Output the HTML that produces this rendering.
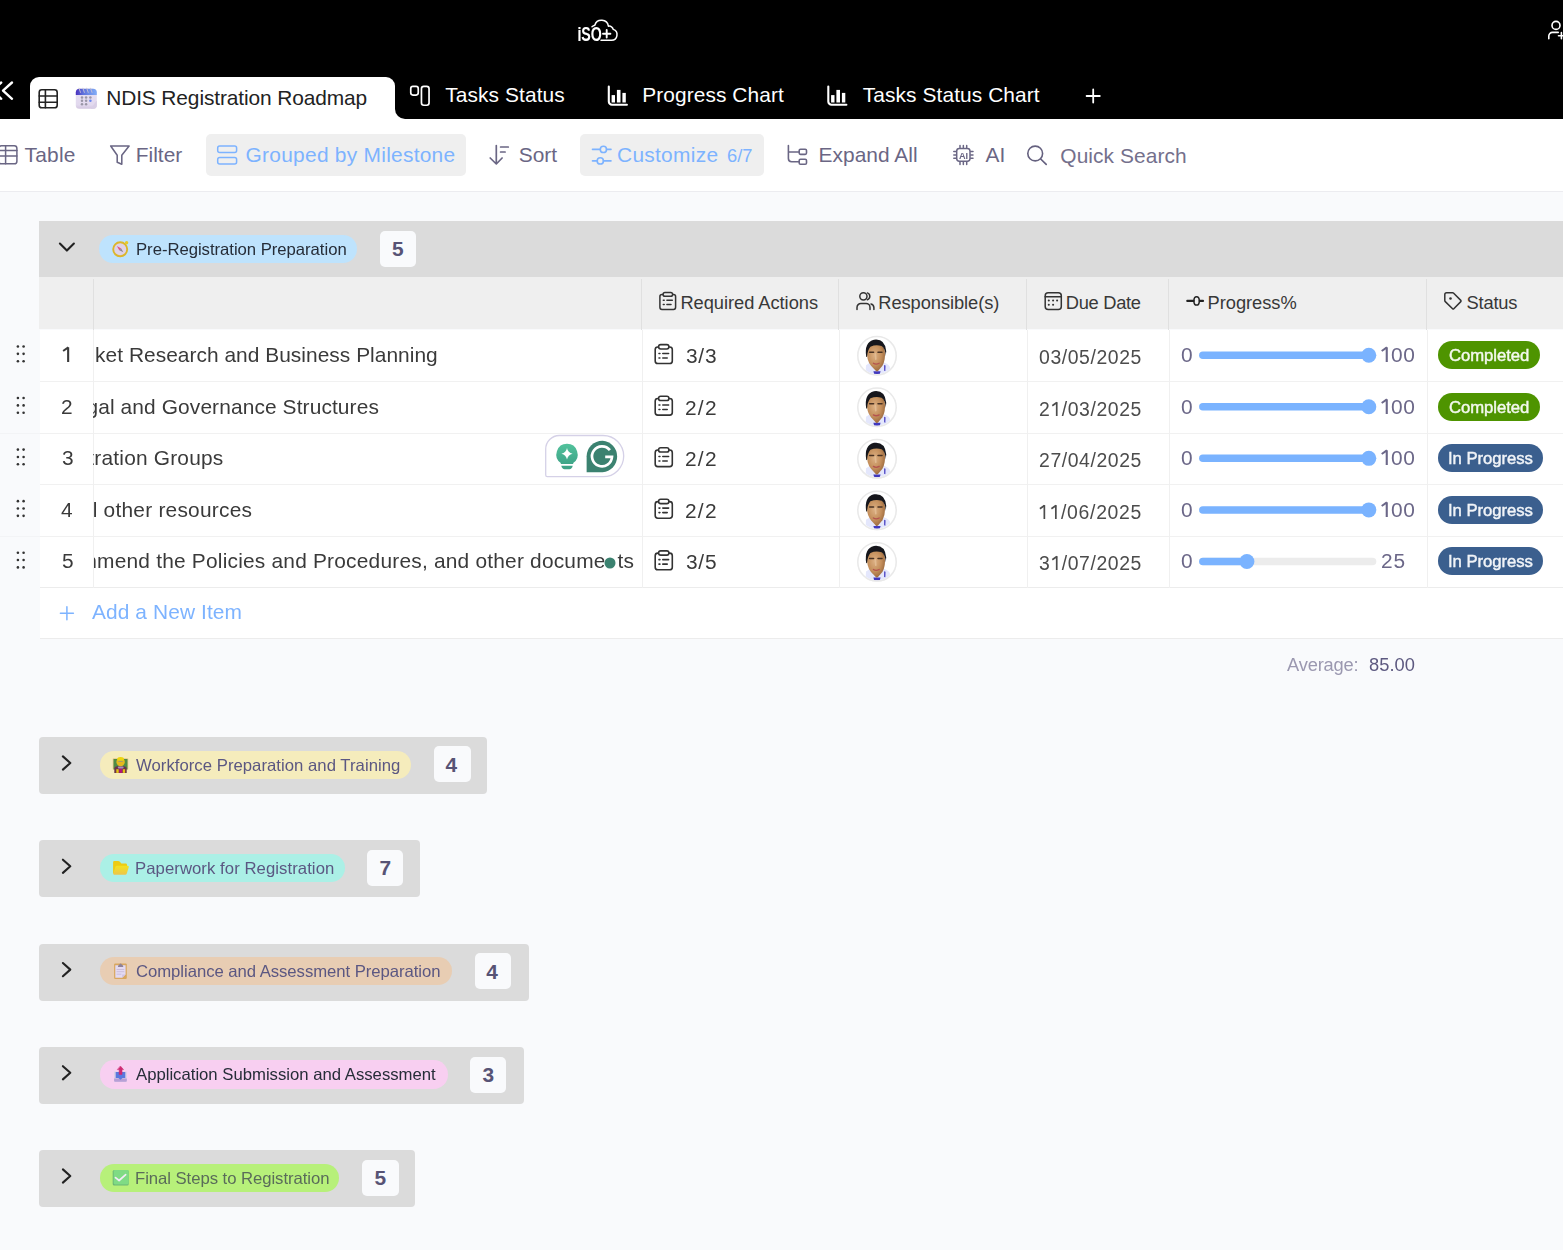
<!DOCTYPE html>
<html><head><meta charset="utf-8"><title>NDIS Registration Roadmap</title>
<style>
html,body{margin:0;padding:0;}
body{width:1563px;height:1250px;overflow:hidden;background:#f9fafc;font-family:"Liberation Sans",sans-serif;}
#root{position:relative;width:1563px;height:1250px;overflow:hidden;background:#f9fafc;}
.b{position:absolute;}
.t{position:absolute;white-space:nowrap;line-height:1;}
.g{will-change:transform;}
svg.ov{position:absolute;left:0;top:0;}
</style></head><body><div id="root">
<!-- top black bar -->
<div class="b" style="left:0;top:0;width:1563px;height:119px;background:#000"></div>
<!-- active tab -->
<div class="b" style="left:30px;top:77px;width:365.2px;height:42px;background:#fff;border-radius:9px 9px 0 0"></div>
<div class="b" style="left:395px;top:109px;width:10.2px;height:10px;background:#fff"></div>
<div class="b" style="left:395.2px;top:99px;width:20px;height:20px;background:#000;border-radius:0 0 0 10px"></div>
<!-- toolbar -->
<div class="b" style="left:0;top:119px;width:1563px;height:72px;background:#fff"></div>
<div class="b" style="left:0;top:191px;width:1563px;height:1px;background:#ececf0"></div>
<div class="b" style="left:206px;top:133.6px;width:260px;height:42.6px;background:#efefef;border-radius:5px"></div>
<div class="b" style="left:580px;top:133.6px;width:184.2px;height:42.6px;background:#efefef;border-radius:5px"></div>
<!-- group 1 header -->
<div class="b" style="left:39px;top:221px;width:1524px;height:56.3px;background:#dbdbdb"></div>
<div class="b" style="left:99.3px;top:234.7px;width:257.7px;height:28.1px;background:#bee3fd;border-radius:14px"></div>
<div class="b" style="left:380px;top:230.6px;width:36.3px;height:36.3px;background:#f9fafc;border-radius:5px"></div>
<!-- column header row -->
<div class="b" style="left:39px;top:277.3px;width:1524px;height:52.2px;background:#efefef"></div>
<!-- table body -->
<div class="b" style="left:39.5px;top:329.5px;width:1523.5px;height:309px;background:#fff"></div>
<!-- row lines -->
<div class="b" style="left:39.5px;top:381px;width:1523.5px;height:1px;background:#f1f1f1"></div>
<div class="b" style="left:0;top:432.5px;width:39.5px;height:1px;background:#f3f4f6"></div><div class="b" style="left:39.5px;top:432.5px;width:1523.5px;height:1px;background:#f1f1f1"></div>
<div class="b" style="left:39.5px;top:484px;width:1523.5px;height:1px;background:#f1f1f1"></div>
<div class="b" style="left:0;top:535.5px;width:39.5px;height:1px;background:#f3f4f6"></div><div class="b" style="left:39.5px;top:535.5px;width:1523.5px;height:1px;background:#f1f1f1"></div>
<div class="b" style="left:39.5px;top:587px;width:1523.5px;height:1px;background:#ececec"></div>
<div class="b" style="left:39.5px;top:638px;width:1523.5px;height:1px;background:#ececec"></div>
<!-- header col separators -->
<div class="b" style="left:93px;top:279px;width:1px;height:50.5px;background:#e0e0e0"></div>
<div class="b" style="left:641px;top:279px;width:1px;height:50.5px;background:#e0e0e0"></div>
<div class="b" style="left:838px;top:279px;width:1px;height:50.5px;background:#e0e0e0"></div>
<div class="b" style="left:1026px;top:279px;width:1px;height:50.5px;background:#e0e0e0"></div>
<div class="b" style="left:1168px;top:279px;width:1px;height:50.5px;background:#e0e0e0"></div>
<div class="b" style="left:1426px;top:279px;width:1px;height:50.5px;background:#e0e0e0"></div>
<!-- body col separators -->
<div class="b" style="left:93px;top:329.5px;width:1px;height:258px;background:#f0f0f0"></div>
<div class="b" style="left:641.5px;top:329.5px;width:1px;height:258px;background:#f0f0f0"></div>
<div class="b" style="left:839px;top:329.5px;width:1px;height:258px;background:#f0f0f0"></div>
<div class="b" style="left:1027px;top:329.5px;width:1px;height:258px;background:#f0f0f0"></div>
<div class="b" style="left:1169px;top:329.5px;width:1px;height:258px;background:#f0f0f0"></div>
<div class="b" style="left:1426.5px;top:329.5px;width:1px;height:258px;background:#f0f0f0"></div>
<!-- status badges -->
<div class="b" style="left:1438.4px;top:341px;width:101.6px;height:28.2px;background:#4e9400;border-radius:14.1px"></div>
<div class="b" style="left:1438.4px;top:392.6px;width:101.6px;height:28.2px;background:#4e9400;border-radius:14.1px"></div>
<div class="b" style="left:1438.4px;top:444.2px;width:104.6px;height:28.2px;background:#3b5f8e;border-radius:14.1px"></div>
<div class="b" style="left:1438.4px;top:495.8px;width:104.6px;height:28.2px;background:#3b5f8e;border-radius:14.1px"></div>
<div class="b" style="left:1438.4px;top:547.3px;width:104.6px;height:28.2px;background:#3b5f8e;border-radius:14.1px"></div>
<!-- collapsed groups -->
<div class="b" style="left:39px;top:737px;width:447.7px;height:57px;background:#dbdbdb;border-radius:4px"></div>
<div class="b" style="left:99.6px;top:750.8px;width:311.7px;height:28.3px;background:#f5ecbc;border-radius:14.2px"></div>
<div class="b" style="left:434px;top:746.4px;width:36.6px;height:36px;background:#f9fafc;border-radius:5px"></div>

<div class="b" style="left:39px;top:840.2px;width:380.6px;height:57px;background:#dbdbdb;border-radius:4px"></div>
<div class="b" style="left:99.6px;top:853.9px;width:245px;height:28.3px;background:#abf0e6;border-radius:14.2px"></div>
<div class="b" style="left:367.2px;top:850px;width:36px;height:36px;background:#f9fafc;border-radius:5px"></div>

<div class="b" style="left:39px;top:943.5px;width:490px;height:57px;background:#dbdbdb;border-radius:4px"></div>
<div class="b" style="left:99.6px;top:957.2px;width:352.3px;height:28.3px;background:#e8cdb3;border-radius:14.2px"></div>
<div class="b" style="left:474.7px;top:953.3px;width:36.3px;height:36px;background:#f9fafc;border-radius:5px"></div>

<div class="b" style="left:39px;top:1046.6px;width:484.8px;height:57px;background:#dbdbdb;border-radius:4px"></div>
<div class="b" style="left:99.6px;top:1060.4px;width:348.2px;height:28.3px;background:#f8cff1;border-radius:14.2px"></div>
<div class="b" style="left:470.4px;top:1056.5px;width:36px;height:36px;background:#f9fafc;border-radius:5px"></div>

<div class="b" style="left:39px;top:1149.8px;width:376px;height:57px;background:#dbdbdb;border-radius:4px"></div>
<div class="b" style="left:99.6px;top:1163.5px;width:239.4px;height:28.3px;background:#b7f07a;border-radius:14.2px"></div>
<div class="b" style="left:362.4px;top:1159.6px;width:36.4px;height:36px;background:#f9fafc;border-radius:5px"></div>

<div class="t" style="left:106.20px;top:86px;font-size:20.9px;line-height:23px;color:#222;letter-spacing:-0.106px;">NDIS Registration Roadmap</div>
<div class="t" style="left:445.30px;top:83px;font-size:20.9px;line-height:23px;color:#fff;letter-spacing:0.093px;">Tasks Status</div>
<div class="t" style="left:642.20px;top:83px;font-size:20.9px;line-height:23px;color:#fff;letter-spacing:0.086px;">Progress Chart</div>
<div class="t" style="left:862.80px;top:83px;font-size:20.9px;line-height:23px;color:#fff;letter-spacing:0.088px;">Tasks Status Chart</div>
<div class="t" style="left:24.50px;top:143px;font-size:20.9px;line-height:23px;color:#6a6684;letter-spacing:0.244px;">Table</div>
<div class="t" style="left:135.70px;top:143px;font-size:20.9px;line-height:23px;color:#6a6684;letter-spacing:0.027px;">Filter</div>
<div class="t" style="left:245.60px;top:143px;font-size:20.9px;line-height:23px;color:#7db3ff;letter-spacing:0.271px;">Grouped by Milestone</div>
<div class="t" style="left:518.80px;top:143px;font-size:20.9px;line-height:23px;color:#6a6684;letter-spacing:-0.036px;">Sort</div>
<div class="t" style="left:617.00px;top:143px;font-size:20.9px;line-height:23px;color:#7db3ff;letter-spacing:0.292px;">Customize</div>
<div class="t" style="left:727.00px;top:145px;font-size:18.29px;line-height:21px;color:#7db3ff;letter-spacing:0.027px;">6/7</div>
<div class="t" style="left:818.50px;top:143px;font-size:20.9px;line-height:23px;color:#6a6684;letter-spacing:0.052px;">Expand All</div>
<div class="t" style="left:985.40px;top:143px;font-size:20.9px;line-height:23px;color:#6a6684;letter-spacing:0.266px;">AI</div>
<div class="t" style="left:1060.30px;top:144px;font-size:20.9px;line-height:23px;color:#74708c;letter-spacing:0.084px;">Quick Search</div>
<div class="t g" style="left:135.90px;top:240px;font-size:16.72px;line-height:19px;color:#262d38;letter-spacing:-0.037px;">Pre-Registration Preparation</div>
<div class="t" style="left:392.00px;top:237px;font-size:20.9px;line-height:23px;color:#575375;letter-spacing:0.000px;font-weight:700;">5</div>
<div class="t" style="left:680.40px;top:292px;font-size:18.29px;line-height:21px;color:#383838;letter-spacing:-0.038px;">Required Actions</div>
<div class="t" style="left:878.30px;top:292px;font-size:18.29px;line-height:21px;color:#383838;letter-spacing:-0.064px;">Responsible(s)</div>
<div class="t" style="left:1065.80px;top:292px;font-size:18.29px;line-height:21px;color:#383838;letter-spacing:-0.295px;">Due Date</div>
<div class="t" style="left:1207.60px;top:292px;font-size:18.29px;line-height:21px;color:#383838;letter-spacing:-0.044px;">Progress%</div>
<div class="t" style="left:1466.60px;top:292px;font-size:18.29px;line-height:21px;color:#383838;letter-spacing:-0.217px;">Status</div>
<div class="t g" style="left:60.90px;top:395px;font-size:20.9px;line-height:23px;color:#3a3a3a;letter-spacing:0.000px;">2</div>
<div class="t g" style="left:61.60px;top:446px;font-size:20.9px;line-height:23px;color:#3a3a3a;letter-spacing:0.000px;">3</div>
<div class="t g" style="left:61.10px;top:498px;font-size:20.9px;line-height:23px;color:#3a3a3a;letter-spacing:0.000px;">4</div>
<div class="t g" style="left:61.80px;top:549px;font-size:20.9px;line-height:23px;color:#3a3a3a;letter-spacing:0.000px;">5</div>
<div class="t g" style="left:58.91px;top:343px;font-size:20.9px;line-height:23px;color:#3a3a3a;letter-spacing:0.036px;clip-path:inset(-5px -5px -8px 36.29px);">Market Research and Business Planning</div>
<div class="t g" style="left:63.20px;top:395px;font-size:20.9px;line-height:23px;color:#3a3a3a;letter-spacing:0.115px;clip-path:inset(-5px -5px -8px 30.80px);">Legal and Governance Structures</div>
<div class="t g" style="left:34.25px;top:446px;font-size:20.9px;line-height:23px;color:#3a3a3a;letter-spacing:0.190px;clip-path:inset(-5px -5px -8px 59.75px);">Registration Groups</div>
<div class="t g" style="left:76.48px;top:498px;font-size:20.9px;line-height:23px;color:#3a3a3a;letter-spacing:0.229px;clip-path:inset(-5px -5px -8px 17.52px);">all other resources</div>
<div class="t g" style="left:37.92px;top:549px;font-size:20.9px;line-height:23px;color:#3a3a3a;letter-spacing:0.207px;clip-path:inset(-5px -5px -8px 56.08px);">recommend the Policies and Procedures, and other documents</div>
<div class="t g" style="left:685.90px;top:344px;font-size:20.9px;line-height:23px;color:#3a3a3a;letter-spacing:0.739px;">3/3</div>
<div class="t g" style="left:684.90px;top:396px;font-size:20.9px;line-height:23px;color:#3a3a3a;letter-spacing:1.239px;">2/2</div>
<div class="t g" style="left:684.90px;top:447px;font-size:20.9px;line-height:23px;color:#3a3a3a;letter-spacing:1.239px;">2/2</div>
<div class="t g" style="left:684.90px;top:499px;font-size:20.9px;line-height:23px;color:#3a3a3a;letter-spacing:1.239px;">2/2</div>
<div class="t g" style="left:685.90px;top:550px;font-size:20.9px;line-height:23px;color:#3a3a3a;letter-spacing:0.739px;">3/5</div>
<div class="t g" style="left:1039.00px;top:346px;font-size:19.4px;line-height:22px;color:#4c4c4c;letter-spacing:0.593px;font-kerning:none;">03/05/2025</div>
<div class="t g" style="left:1039.00px;top:398px;font-size:19.4px;line-height:22px;color:#4c4c4c;letter-spacing:0.593px;font-kerning:none;">2&#8199;/03/2025</div>
<div class="t g" style="left:1039.00px;top:449px;font-size:19.4px;line-height:22px;color:#4c4c4c;letter-spacing:0.593px;font-kerning:none;">27/04/2025</div>
<div class="t g" style="left:1038.00px;top:501px;font-size:19.4px;line-height:22px;color:#4c4c4c;letter-spacing:0.704px;font-kerning:none;">&#8199;&#8199;/06/2025</div>
<div class="t g" style="left:1039.00px;top:552px;font-size:19.4px;line-height:22px;color:#4c4c4c;letter-spacing:0.593px;font-kerning:none;">3&#8199;/07/2025</div>
<div class="t g" style="left:1181.40px;top:343px;font-size:20.9px;line-height:23px;color:#6b6788;letter-spacing:0.000px;">0</div>
<div class="t g" style="left:1390.50px;top:343px;font-size:20.9px;line-height:23px;color:#6b6788;letter-spacing:0.682px;">00</div>
<div class="t g" style="left:1181.40px;top:395px;font-size:20.9px;line-height:23px;color:#6b6788;letter-spacing:0.000px;">0</div>
<div class="t g" style="left:1390.50px;top:395px;font-size:20.9px;line-height:23px;color:#6b6788;letter-spacing:0.682px;">00</div>
<div class="t g" style="left:1181.40px;top:446px;font-size:20.9px;line-height:23px;color:#6b6788;letter-spacing:0.000px;">0</div>
<div class="t g" style="left:1390.50px;top:446px;font-size:20.9px;line-height:23px;color:#6b6788;letter-spacing:0.682px;">00</div>
<div class="t g" style="left:1181.40px;top:498px;font-size:20.9px;line-height:23px;color:#6b6788;letter-spacing:0.000px;">0</div>
<div class="t g" style="left:1390.50px;top:498px;font-size:20.9px;line-height:23px;color:#6b6788;letter-spacing:0.682px;">00</div>
<div class="t g" style="left:1181.40px;top:549px;font-size:20.9px;line-height:23px;color:#6b6788;letter-spacing:0.000px;">0</div>
<div class="t g" style="left:1381.10px;top:549px;font-size:20.9px;line-height:23px;color:#6b6788;letter-spacing:0.882px;">25</div>
<div class="t g" style="left:1449.10px;top:346px;font-size:16.72px;line-height:19px;color:#f4f9ee;letter-spacing:-0.061px;-webkit-text-stroke:0.45px #f4f9ee;">Completed</div>
<div class="t g" style="left:1449.10px;top:398px;font-size:16.72px;line-height:19px;color:#f4f9ee;letter-spacing:-0.061px;-webkit-text-stroke:0.45px #f4f9ee;">Completed</div>
<div class="t g" style="left:1448.10px;top:449px;font-size:16.72px;line-height:19px;color:#f1f4f8;letter-spacing:-0.056px;-webkit-text-stroke:0.45px #f1f4f8;">In Progress</div>
<div class="t g" style="left:1448.10px;top:501px;font-size:16.72px;line-height:19px;color:#f1f4f8;letter-spacing:-0.056px;-webkit-text-stroke:0.45px #f1f4f8;">In Progress</div>
<div class="t g" style="left:1448.10px;top:552px;font-size:16.72px;line-height:19px;color:#f1f4f8;letter-spacing:-0.056px;-webkit-text-stroke:0.45px #f1f4f8;">In Progress</div>
<div class="t g" style="left:91.50px;top:600px;font-size:20.9px;line-height:23px;color:#7db3ff;letter-spacing:0.099px;">Add a New Item</div>
<div class="t g" style="left:1286.60px;top:654px;font-size:18.29px;line-height:21px;color:#9b98b0;letter-spacing:-0.166px;">Average:</div>
<div class="t g" style="left:1369.40px;top:654px;font-size:18.29px;line-height:21px;color:#5d5980;letter-spacing:0.030px;">85.00</div>
<div class="t g" style="left:136.10px;top:756px;font-size:16.72px;line-height:19px;color:#5b5782;letter-spacing:0.028px;">Workforce Preparation and Training</div>
<div class="t" style="left:445.50px;top:753px;font-size:20.9px;line-height:23px;color:#575375;letter-spacing:0.000px;font-weight:700;">4</div>
<div class="t g" style="left:135.40px;top:859px;font-size:16.72px;line-height:19px;color:#5b5782;letter-spacing:0.062px;">Paperwork for Registration</div>
<div class="t" style="left:379.50px;top:856px;font-size:20.9px;line-height:23px;color:#575375;letter-spacing:0.000px;font-weight:700;">7</div>
<div class="t g" style="left:136.40px;top:962px;font-size:16.72px;line-height:19px;color:#5b5782;letter-spacing:-0.051px;">Compliance and Assessment Preparation</div>
<div class="t" style="left:486.30px;top:960px;font-size:20.9px;line-height:23px;color:#575375;letter-spacing:0.000px;font-weight:700;">4</div>
<div class="t g" style="left:136.10px;top:1065px;font-size:16.72px;line-height:19px;color:#262d38;letter-spacing:-0.005px;">Application Submission and Assessment</div>
<div class="t" style="left:482.50px;top:1063px;font-size:20.9px;line-height:23px;color:#575375;letter-spacing:0.000px;font-weight:700;">3</div>
<div class="t g" style="left:135.40px;top:1169px;font-size:16.72px;line-height:19px;color:#5a6c5a;letter-spacing:-0.054px;">Final Steps to Registration</div>
<div class="t" style="left:374.50px;top:1166px;font-size:20.9px;line-height:23px;color:#575375;letter-spacing:0.000px;font-weight:700;">5</div>
<svg class="ov" width="1563" height="1250" viewBox="0 0 1563 1250" fill="none" stroke-linecap="round" stroke-linejoin="round">
<g id="logo">
<text x="577.4" y="41.1" font-family="Liberation Sans, sans-serif" font-weight="700" font-size="19.5" fill="#fff" stroke="none" textLength="24.5" lengthAdjust="spacingAndGlyphs">ISO</text>
<path d="M601 40.3 H611.5 A5.6 5.6 0 0 0 613.2 29.4 A4 4 0 0 0 608.4 26.2 A7 7 0 0 0 594.8 25.2 Q593.2 25.6 592 26.8" stroke="#fff" stroke-width="1.5" />
<path d="M603 33.7 H610.4 M606.7 29.9 V37.6" stroke="#fff" stroke-width="1.9" />
<rect x="576.5" y="29.0" width="4.6" height="0.9" fill="#000" stroke="none"/>
</g>
<circle cx="1556" cy="25.4" r="4" stroke="#fff" stroke-width="1.6"/>
<path d="M1548.8 38.8 V36 A3.6 3.6 0 0 1 1552.4 32.4 H1558.2" stroke="#fff" stroke-width="1.6" />
<path d="M1558.5 35.7 H1564 M1561.4 32.6 V38.8" stroke="#fff" stroke-width="1.6" />
<path d="M12 82.5 L3 90.7 L12 98.8" stroke="#fff" stroke-width="2.4" />
<path d="M1.2 82.5 L-7.8 90.7 L1.2 98.8" stroke="#fff" stroke-width="2.4" />
<rect x="39.20" y="89.80" width="18.00" height="18.00" rx="2.6" stroke="#222" stroke-width="1.6" fill="none"/>
<path d="M39.2 96.0 H57.2 M39.2 102.2 H57.2 M45.400000000000006 89.8 V107.8" stroke="#222" stroke-width="1.6" />
<defs><linearGradient id="calg" x1="0" x2="1" y1="0" y2="0"><stop offset="0" stop-color="#4a30bd"/><stop offset="0.35" stop-color="#5f72dc"/><stop offset="1" stop-color="#82aef7"/></linearGradient><linearGradient id="calb" x1="0" x2="0" y1="0" y2="1"><stop offset="0" stop-color="#e6dff2"/><stop offset="0.8" stop-color="#e2d9ee"/><stop offset="1" stop-color="#d2c6e0"/></linearGradient></defs>
<rect x="75.8" y="88.8" width="21" height="20" rx="3.6" fill="url(#calb)" stroke="none"/>
<path d="M75.8 95 V92.6 A3.8 3.8 0 0 1 79.6 88.8 H93 A3.8 3.8 0 0 1 96.8 92.6 V95 Z" fill="url(#calg)" stroke="none"/>
<circle cx="82.0" cy="97.4" r="1.25" fill="#9a96a6" stroke="none"/>
<circle cx="82.0" cy="100.8" r="1.25" fill="#9a96a6" stroke="none"/>
<circle cx="82.0" cy="104.3" r="1.25" fill="#9a96a6" stroke="none"/>
<circle cx="86.1" cy="97.4" r="1.25" fill="#9a96a6" stroke="none"/>
<circle cx="86.1" cy="100.8" r="1.25" fill="#9a96a6" stroke="none"/>
<circle cx="86.1" cy="104.3" r="1.25" fill="#9a96a6" stroke="none"/>
<circle cx="90.4" cy="97.4" r="1.25" fill="#9a96a6" stroke="none"/>
<circle cx="90.4" cy="100.8" r="1.25" fill="#6a86ee" stroke="none"/>
<path d="M79.0 88.2 L80.5 92.4" stroke="#c9c2d3" stroke-width="0.9" />
<path d="M82.9 88.2 L84.4 92.4" stroke="#c9c2d3" stroke-width="0.9" />
<path d="M86.7 88.2 L88.2 92.4" stroke="#c9c2d3" stroke-width="0.9" />
<path d="M90.5 88.2 L92.0 92.4" stroke="#c9c2d3" stroke-width="0.9" />
<path d="M96.8 100.5 L90.5 108.8 H93.2 A3.6 3.6 0 0 0 96.8 105.2 Z" fill="#d9cfe6" stroke="none"/>
<rect x="410.75" y="86.45" width="7.50" height="8.60" rx="2.2" stroke="#fff" stroke-width="1.7" fill="none"/>
<rect x="421.45" y="86.45" width="7.60" height="18.80" rx="2.4" stroke="#fff" stroke-width="1.7" fill="none"/>
<path d="M608.8 86.6 V101.6 A3.2 3.2 0 0 0 612.0 104.8 H626.9" stroke="#fff" stroke-width="2.1" />
<rect x="611.60" y="95.1" width="3.4" height="7.4" fill="#fff" stroke="none"/>
<rect x="616.90" y="89.9" width="3.6" height="12.6" fill="#fff" stroke="none"/>
<rect x="622.40" y="92.9" width="3.4" height="9.6" fill="#fff" stroke="none"/>
<path d="M828.3 86.6 V101.6 A3.2 3.2 0 0 0 831.5 104.8 H846.4" stroke="#fff" stroke-width="2.1" />
<rect x="831.10" y="95.1" width="3.4" height="7.4" fill="#fff" stroke="none"/>
<rect x="836.40" y="89.9" width="3.6" height="12.6" fill="#fff" stroke="none"/>
<rect x="841.90" y="92.9" width="3.4" height="9.6" fill="#fff" stroke="none"/>
<path d="M1086.6 96 H1099.8 M1093.2 89.4 V102.6" stroke="#fff" stroke-width="1.8" />
<rect x="-1.10" y="145.85" width="18.00" height="18.00" rx="2.6" stroke="#6a6684" stroke-width="1.5" fill="none"/>
<path d="M-1.0999999999999996 150.4 H16.9 M-1.0999999999999996 155.9 H16.9 M5.6000000000000005 145.85 V163.85" stroke="#6a6684" stroke-width="1.5" />
<path d="M110.7 146 H129.1 L121.8 155.3 V164.2 L117.2 162.2 V155.3 Z" stroke="#6a6684" stroke-width="1.55" />
<rect x="217.70" y="145.95" width="18.90" height="6.50" rx="2" stroke="#7db3ff" stroke-width="1.5" fill="none"/>
<rect x="217.70" y="157.45" width="18.90" height="6.50" rx="2" stroke="#7db3ff" stroke-width="1.5" fill="none"/>
<path d="M496.3 145.6 V163.8 M490.2 158 L496.3 164 L502.1 158 M500.6 147 H508.3 M500.6 152 H505.1" stroke="#6a6684" stroke-width="1.7" />
<path d="M592.5 149.4 H600.2 M606.6 149.4 H611" stroke="#7db3ff" stroke-width="1.6" />
<circle cx="603.4" cy="149.4" r="3.1" stroke="#7db3ff" stroke-width="1.6"/>
<path d="M592.5 160.9 H597.1 M603.5 160.9 H611" stroke="#7db3ff" stroke-width="1.6" />
<circle cx="600.3" cy="160.9" r="3.1" stroke="#7db3ff" stroke-width="1.6"/>
<path d="M788.4 145.6 V158.6 A3.2 3.2 0 0 0 791.6 161.8 H799.2 M788.4 152 H799.2" stroke="#6a6684" stroke-width="1.6" />
<rect x="799.20" y="149.30" width="7.30" height="5.10" rx="1.3" stroke="#6a6684" stroke-width="1.6" fill="none"/>
<rect x="799.20" y="159.20" width="7.30" height="5.10" rx="1.3" stroke="#6a6684" stroke-width="1.6" fill="none"/>
<rect x="956.70" y="148.40" width="13.30" height="12.80" rx="2.6" stroke="#6a6684" stroke-width="1.5" fill="none"/>
<path d="M960.0 145.4 V147.6 M960.0 162 V164.4 M963.35 145.4 V147.6 M963.35 162 V164.4 M966.7 145.4 V147.6 M966.7 162 V164.4 M953.8 151.6 H955.9 M970.8 151.6 H973 M953.8 154.9 H955.9 M970.8 154.9 H973 M953.8 158.2 H955.9 M970.8 158.2 H973" stroke="#6a6684" stroke-width="1.5" />
<text x="958.9" y="158.5" font-family="Liberation Sans, sans-serif" font-weight="700" font-size="9.6" fill="#6a6684" stroke="none" textLength="9.2" lengthAdjust="spacingAndGlyphs">AI</text>
<circle cx="1035.2" cy="153.5" r="7.4" stroke="#65617f" stroke-width="1.6"/>
<path d="M1040.7 159 L1046.2 164.3" stroke="#65617f" stroke-width="1.7" />
<path d="M59.9 243.6 L66.9 250.6 L73.9 243.6" stroke="#222" stroke-width="2.1" />
<path d="M62.9 756.4 L70.3 763.0 L62.9 769.6" stroke="#222" stroke-width="2.1" />
<path d="M62.9 859.6999999999999 L70.3 866.3 L62.9 872.9" stroke="#222" stroke-width="2.1" />
<path d="M62.9 963.0 L70.3 969.6 L62.9 976.2" stroke="#222" stroke-width="2.1" />
<path d="M62.9 1066.2 L70.3 1072.8 L62.9 1079.3999999999999" stroke="#222" stroke-width="2.1" />
<path d="M62.9 1169.4 L70.3 1176.0 L62.9 1182.6" stroke="#222" stroke-width="2.1" />
<circle cx="120.2" cy="249.3" r="7.0" fill="#dfd2e8" stroke="#dcb62b" stroke-width="1.9"/>
<circle cx="126.6" cy="242.8" r="1.7" fill="#e6c92c" stroke="none"/>
<path d="M116.9 246 L121.2 248.4 L119.3 250.2 Z" fill="#e0527f" stroke="none"/>
<path d="M123.3 252.3 L119.3 250.2 L121.2 248.4 Z" fill="#8d8791" stroke="none"/>
<rect x="112.7" y="758.3" width="15.6" height="11.6" rx="0.8" fill="#e6c68a" stroke="none"/>
<rect x="113.5" y="759" width="14" height="10.3" fill="#4f8c44" stroke="none"/>
<path d="M114.3 772.9 V769 Q114.3 766.2 117.5 766.2 H123.6 Q126.7 766.2 126.7 769 V772.9 Z" fill="#6b3349" stroke="none"/>
<rect x="116.3" y="769.2" width="2.4" height="3.7" fill="#e6c313" stroke="none"/>
<rect x="122.7" y="769.2" width="2.4" height="3.7" fill="#e6c313" stroke="none"/>
<rect x="119.3" y="768.6" width="2.8" height="4.3" fill="#b5127c" stroke="none"/>
<rect x="117.8" y="766.5" width="5.8" height="2.1" rx="1" fill="#a890b8" stroke="none"/>
<circle cx="120.6" cy="762" r="4.2" fill="#e5b81e" stroke="none"/>
<ellipse cx="120.6" cy="759" rx="3.4" ry="2" fill="#ecd50f" stroke="none"/>
<rect x="118.3" y="760.8" width="4.6" height="1.2" rx="0.6" fill="#a99a6a" stroke="none"/>
<defs><linearGradient id="fold" x1="0" x2="0" y1="0" y2="1"><stop offset="0" stop-color="#f3e31f"/><stop offset="1" stop-color="#ecc44c"/></linearGradient></defs>
<path d="M113.1 873.6 V862.2 Q113.1 861 114.3 861 H118.2 Q119 861 119.6 861.6 L121.4 863.4 H125.6 Q127 863.4 127 864.8 V873 Z" fill="#eecb12" stroke="none"/>
<path d="M114.4 874.8 Q113.1 874.8 113.4 873.5 L115.2 867.2 Q115.6 865.8 117 865.8 H127.6 Q129.1 865.8 128.7 867.2 L126.8 873.6 Q126.4 874.8 125.2 874.8 Z" fill="url(#fold)" stroke="none"/>
<rect x="114.1" y="963.4" width="12.7" height="15.6" rx="1.2" fill="#d9a75e" stroke="none"/>
<path d="M115.3 965.3 H125.6 V974.4 L122.2 977.8 H115.3 Z" fill="#e3daf3" stroke="none"/>
<path d="M125.6 974.4 H122.2 V977.8 Z" fill="#cfc2e2" stroke="none"/>
<path d="M117.9 967 Q117.9 965.2 119.4 964.6 Q120.6 962.4 121.8 964.6 Q123.3 965.2 123.3 967 Z" fill="#8f8297" stroke="none"/>
<path d="M117 969.5 H123.9 M117 971.7 H123.9 M117 974.2 H121" stroke="#c8bbd9" stroke-width="0.9" />
<path d="M114.1 1071.6 H126.8 V1081.8 H114.1 Z" fill="#d9cfe6" stroke="none"/>
<path d="M114.1 1078.6 H126.8 V1080.8 Q126.8 1081.8 125.8 1081.8 H115.1 Q114.1 1081.8 114.1 1080.8 Z" fill="#b79fd6" stroke="none"/>
<path d="M115.7 1072 H125.3 V1078 H122.6 L120.5 1079.8 L118.4 1078 H115.7 Z" fill="#5a78de" stroke="none"/>
<path d="M120.6 1066.3 L123.5 1069.6 H122 V1074.4 H119.2 V1069.6 H117.7 Z" fill="#cf2a72" stroke="#cf2a72" stroke-width="0.6"/>
<rect x="112.7" y="1170" width="16" height="15.5" rx="1.6" fill="#6bb676" stroke="none"/>
<rect x="113.6" y="1170" width="15.1" height="14.4" rx="1.4" fill="#7fdb84" stroke="none"/>
<path d="M115.5 1177.6 L119.1 1180.5 L125.7 1174.7" stroke="#f3ecf8" stroke-width="1.7" />
<rect x="659.90" y="294.50" width="15.70" height="14.90" rx="2.1" stroke="#333" stroke-width="1.5" fill="none"/>
<rect x="663.10" y="292.40" width="9.50" height="3.90" rx="1.90" fill="#efefef" stroke="#333" stroke-width="1.5" class="clipbg"/>
<path d="M663.30 300.30 h0.90 M666.90 300.30 H672.30 M663.30 304.50 h0.90 M666.90 304.50 H671.00" stroke="#333" stroke-width="1.5" />
<circle cx="863.4" cy="296.3" r="3.6" stroke="#333" stroke-width="1.5"/>
<path d="M867.4 292.9 A3.6 3.6 0 0 1 867.4 299.7" stroke="#333" stroke-width="1.5" />
<path d="M857 309.6 V307.4 A3.9 3.9 0 0 1 860.9 303.5 H866.1 A3.9 3.9 0 0 1 870 307.4 V309.6" stroke="#333" stroke-width="1.5" />
<path d="M871 304 A3.9 3.9 0 0 1 873.9 307.6 V309.6" stroke="#333" stroke-width="1.5" />
<rect x="1045.20" y="292.70" width="16.10" height="16.70" rx="3" stroke="#333" stroke-width="1.5" fill="none"/>
<path d="M1045.2 296.8 H1061.3" stroke="#333" stroke-width="1.6" />
<circle cx="1048.8" cy="300.5" r="1.05" fill="#333" stroke="none"/>
<circle cx="1053.1" cy="300.5" r="1.05" fill="#333" stroke="none"/>
<circle cx="1057.1" cy="300.5" r="1.05" fill="#333" stroke="none"/>
<circle cx="1048.8" cy="304.7" r="1.05" fill="#333" stroke="none"/>
<circle cx="1053.1" cy="304.7" r="1.05" fill="#333" stroke="none"/>
<path d="M1187.3 300.9 H1193.6 M1199.8 300.9 H1203" stroke="#222" stroke-width="2.2" />
<ellipse cx="1196.6" cy="300.9" rx="2.7" ry="4.2" stroke="#222" stroke-width="1.5"/>
<path d="M1446.6 292.7 H1452.6 Q1453.2 292.7 1453.7 293.2 L1460.8 300.4 Q1461.4 301 1460.8 301.6 L1453.8 308.7 Q1453.2 309.3 1452.6 308.7 L1445.3 301.6 Q1444.8 301.1 1444.8 300.4 V294.5 Q1444.8 292.7 1446.6 292.7 Z" stroke="#333" stroke-width="1.5" />
<circle cx="1450.5" cy="298.5" r="1.3" fill="#333" stroke="none"/>
<rect x="67.10" y="347.30" width="2.1" height="14.7" fill="#3a3a3a" stroke="none"/>
<path d="M63.10 351.00 L68.30 347.45" stroke="#3a3a3a" stroke-width="2" stroke-linecap="butt"/>
<rect x="1385.70" y="347.30" width="2.1" height="14.7" fill="#6b6788" stroke="none"/>
<path d="M1381.70 351.00 L1386.90 347.45" stroke="#6b6788" stroke-width="2" stroke-linecap="butt"/>
<rect x="1385.70" y="399.30" width="2.1" height="14.7" fill="#6b6788" stroke="none"/>
<path d="M1381.70 403.00 L1386.90 399.45" stroke="#6b6788" stroke-width="2" stroke-linecap="butt"/>
<rect x="1385.70" y="450.30" width="2.1" height="14.7" fill="#6b6788" stroke="none"/>
<path d="M1381.70 454.00 L1386.90 450.45" stroke="#6b6788" stroke-width="2" stroke-linecap="butt"/>
<rect x="1385.70" y="502.30" width="2.1" height="14.7" fill="#6b6788" stroke="none"/>
<path d="M1381.70 506.00 L1386.90 502.45" stroke="#6b6788" stroke-width="2" stroke-linecap="butt"/>
<defs><clipPath id="avc"><circle r="18.4"/></clipPath><filter id="avb" x="-20%" y="-20%" width="140%" height="140%"><feGaussianBlur stdDeviation="0.45"/></filter><radialGradient id="avs" cx="0.42" cy="0.4" r="0.62"><stop offset="0" stop-color="#dcb083"/><stop offset="0.6" stop-color="#c48f5c"/><stop offset="1" stop-color="#9c6a3e"/></radialGradient></defs>
<circle cx="17.9" cy="346.50" r="1.3" fill="#333" stroke="none"/>
<circle cx="17.9" cy="353.85" r="1.3" fill="#333" stroke="none"/>
<circle cx="17.9" cy="361.20" r="1.3" fill="#333" stroke="none"/>
<circle cx="23.6" cy="346.50" r="1.3" fill="#333" stroke="none"/>
<circle cx="23.6" cy="353.85" r="1.3" fill="#333" stroke="none"/>
<circle cx="23.6" cy="361.20" r="1.3" fill="#333" stroke="none"/>
<rect x="655.20" y="346.95" width="17.10" height="16.60" rx="2.6" stroke="#333" stroke-width="1.6" fill="none"/>
<rect x="658.60" y="344.65" width="10.30" height="4.3" rx="2.1" fill="#fff" stroke="#333" stroke-width="1.6"/>
<path d="M659.00 353.45 h0.9 M662.80 353.45 H668.60 M659.00 357.95 h0.9 M662.80 357.95 H667.20" stroke="#333" stroke-width="1.6" />
<rect x="1199.1" y="351.50" width="169.70" height="7.5" rx="3.75" fill="#7ab3ff" stroke="none"/>
<circle cx="1368.8" cy="355.25" r="7.5" fill="#7ab3ff" stroke="none"/>
<g transform="translate(877.0,355.70)"><circle r="19.6" fill="#f4f4f4" stroke="none" opacity="0.8" cy="0.6"/><circle r="19.2" fill="#fff" stroke="#e9e9e9" stroke-width="1.5"/><g clip-path="url(#avc)" filter="url(#avb)"><path d="M-11.5 19 L-11 9.5 Q-7 6 -2 6.4 L5 6.4 Q10.5 7.4 12.8 11 L13.4 19 Z" fill="#e4e7fc" stroke="none"/><path d="M-3.6 15.6 H3.6 L2.8 18.4 H-2.8 Z" fill="#4038bd" stroke="none"/><path d="M7 9.4 L8.6 9.9 L8.4 15.4 L7 15 Z" fill="#5b55c9" stroke="none"/><path d="M-9.8 -5 Q-10.8 4 -6 10 L-1 15.4 Q0.2 16 1 15.2 L5.4 10 Q8.8 4 7.8 -5 Q6.8 -11.4 -0.8 -11.4 Q-8.6 -11.4 -9.8 -5 Z" fill="url(#avs)" stroke="none"/><path d="M-10.8 1 Q-13 -13.6 -3 -16 Q8 -17.4 9.2 -4.6 L8.8 0.6 Q8.4 -7 4.6 -9.6 Q-1 -11.4 -6.6 -9 Q-9.6 -5.6 -10 1.4 Z" fill="#14161b" stroke="none"/><path d="M-7.4 -3.4 H-3.4 M1 -3.4 H5" stroke="#4a3324" stroke-width="1.5"/><path d="M-1.6 -2 L-1.2 3.4" stroke="#e2bb92" stroke-width="1.6"/><path d="M-3.6 7.6 Q-1 9.4 2.2 7.6" stroke="#b4534f" stroke-width="1.3"/></g></g>
<circle cx="17.9" cy="398.05" r="1.3" fill="#333" stroke="none"/>
<circle cx="17.9" cy="405.40" r="1.3" fill="#333" stroke="none"/>
<circle cx="17.9" cy="412.75" r="1.3" fill="#333" stroke="none"/>
<circle cx="23.6" cy="398.05" r="1.3" fill="#333" stroke="none"/>
<circle cx="23.6" cy="405.40" r="1.3" fill="#333" stroke="none"/>
<circle cx="23.6" cy="412.75" r="1.3" fill="#333" stroke="none"/>
<rect x="655.20" y="398.50" width="17.10" height="16.60" rx="2.6" stroke="#333" stroke-width="1.6" fill="none"/>
<rect x="658.60" y="396.20" width="10.30" height="4.3" rx="2.1" fill="#fff" stroke="#333" stroke-width="1.6"/>
<path d="M659.00 405.00 h0.9 M662.80 405.00 H668.60 M659.00 409.50 h0.9 M662.80 409.50 H667.20" stroke="#333" stroke-width="1.6" />
<rect x="1199.1" y="403.05" width="169.70" height="7.5" rx="3.75" fill="#7ab3ff" stroke="none"/>
<circle cx="1368.8" cy="406.80" r="7.5" fill="#7ab3ff" stroke="none"/>
<g transform="translate(877.0,407.25)"><circle r="19.6" fill="#f4f4f4" stroke="none" opacity="0.8" cy="0.6"/><circle r="19.2" fill="#fff" stroke="#e9e9e9" stroke-width="1.5"/><g clip-path="url(#avc)" filter="url(#avb)"><path d="M-11.5 19 L-11 9.5 Q-7 6 -2 6.4 L5 6.4 Q10.5 7.4 12.8 11 L13.4 19 Z" fill="#e4e7fc" stroke="none"/><path d="M-3.6 15.6 H3.6 L2.8 18.4 H-2.8 Z" fill="#4038bd" stroke="none"/><path d="M7 9.4 L8.6 9.9 L8.4 15.4 L7 15 Z" fill="#5b55c9" stroke="none"/><path d="M-9.8 -5 Q-10.8 4 -6 10 L-1 15.4 Q0.2 16 1 15.2 L5.4 10 Q8.8 4 7.8 -5 Q6.8 -11.4 -0.8 -11.4 Q-8.6 -11.4 -9.8 -5 Z" fill="url(#avs)" stroke="none"/><path d="M-10.8 1 Q-13 -13.6 -3 -16 Q8 -17.4 9.2 -4.6 L8.8 0.6 Q8.4 -7 4.6 -9.6 Q-1 -11.4 -6.6 -9 Q-9.6 -5.6 -10 1.4 Z" fill="#14161b" stroke="none"/><path d="M-7.4 -3.4 H-3.4 M1 -3.4 H5" stroke="#4a3324" stroke-width="1.5"/><path d="M-1.6 -2 L-1.2 3.4" stroke="#e2bb92" stroke-width="1.6"/><path d="M-3.6 7.6 Q-1 9.4 2.2 7.6" stroke="#b4534f" stroke-width="1.3"/></g></g>
<circle cx="17.9" cy="449.60" r="1.3" fill="#333" stroke="none"/>
<circle cx="17.9" cy="456.95" r="1.3" fill="#333" stroke="none"/>
<circle cx="17.9" cy="464.30" r="1.3" fill="#333" stroke="none"/>
<circle cx="23.6" cy="449.60" r="1.3" fill="#333" stroke="none"/>
<circle cx="23.6" cy="456.95" r="1.3" fill="#333" stroke="none"/>
<circle cx="23.6" cy="464.30" r="1.3" fill="#333" stroke="none"/>
<rect x="655.20" y="450.05" width="17.10" height="16.60" rx="2.6" stroke="#333" stroke-width="1.6" fill="none"/>
<rect x="658.60" y="447.75" width="10.30" height="4.3" rx="2.1" fill="#fff" stroke="#333" stroke-width="1.6"/>
<path d="M659.00 456.55 h0.9 M662.80 456.55 H668.60 M659.00 461.05 h0.9 M662.80 461.05 H667.20" stroke="#333" stroke-width="1.6" />
<rect x="1199.1" y="454.60" width="169.70" height="7.5" rx="3.75" fill="#7ab3ff" stroke="none"/>
<circle cx="1368.8" cy="458.35" r="7.5" fill="#7ab3ff" stroke="none"/>
<g transform="translate(877.0,458.80)"><circle r="19.6" fill="#f4f4f4" stroke="none" opacity="0.8" cy="0.6"/><circle r="19.2" fill="#fff" stroke="#e9e9e9" stroke-width="1.5"/><g clip-path="url(#avc)" filter="url(#avb)"><path d="M-11.5 19 L-11 9.5 Q-7 6 -2 6.4 L5 6.4 Q10.5 7.4 12.8 11 L13.4 19 Z" fill="#e4e7fc" stroke="none"/><path d="M-3.6 15.6 H3.6 L2.8 18.4 H-2.8 Z" fill="#4038bd" stroke="none"/><path d="M7 9.4 L8.6 9.9 L8.4 15.4 L7 15 Z" fill="#5b55c9" stroke="none"/><path d="M-9.8 -5 Q-10.8 4 -6 10 L-1 15.4 Q0.2 16 1 15.2 L5.4 10 Q8.8 4 7.8 -5 Q6.8 -11.4 -0.8 -11.4 Q-8.6 -11.4 -9.8 -5 Z" fill="url(#avs)" stroke="none"/><path d="M-10.8 1 Q-13 -13.6 -3 -16 Q8 -17.4 9.2 -4.6 L8.8 0.6 Q8.4 -7 4.6 -9.6 Q-1 -11.4 -6.6 -9 Q-9.6 -5.6 -10 1.4 Z" fill="#14161b" stroke="none"/><path d="M-7.4 -3.4 H-3.4 M1 -3.4 H5" stroke="#4a3324" stroke-width="1.5"/><path d="M-1.6 -2 L-1.2 3.4" stroke="#e2bb92" stroke-width="1.6"/><path d="M-3.6 7.6 Q-1 9.4 2.2 7.6" stroke="#b4534f" stroke-width="1.3"/></g></g>
<circle cx="17.9" cy="501.15" r="1.3" fill="#333" stroke="none"/>
<circle cx="17.9" cy="508.50" r="1.3" fill="#333" stroke="none"/>
<circle cx="17.9" cy="515.85" r="1.3" fill="#333" stroke="none"/>
<circle cx="23.6" cy="501.15" r="1.3" fill="#333" stroke="none"/>
<circle cx="23.6" cy="508.50" r="1.3" fill="#333" stroke="none"/>
<circle cx="23.6" cy="515.85" r="1.3" fill="#333" stroke="none"/>
<rect x="655.20" y="501.60" width="17.10" height="16.60" rx="2.6" stroke="#333" stroke-width="1.6" fill="none"/>
<rect x="658.60" y="499.30" width="10.30" height="4.3" rx="2.1" fill="#fff" stroke="#333" stroke-width="1.6"/>
<path d="M659.00 508.10 h0.9 M662.80 508.10 H668.60 M659.00 512.60 h0.9 M662.80 512.60 H667.20" stroke="#333" stroke-width="1.6" />
<rect x="1199.1" y="506.15" width="169.70" height="7.5" rx="3.75" fill="#7ab3ff" stroke="none"/>
<circle cx="1368.8" cy="509.90" r="7.5" fill="#7ab3ff" stroke="none"/>
<g transform="translate(877.0,510.35)"><circle r="19.6" fill="#f4f4f4" stroke="none" opacity="0.8" cy="0.6"/><circle r="19.2" fill="#fff" stroke="#e9e9e9" stroke-width="1.5"/><g clip-path="url(#avc)" filter="url(#avb)"><path d="M-11.5 19 L-11 9.5 Q-7 6 -2 6.4 L5 6.4 Q10.5 7.4 12.8 11 L13.4 19 Z" fill="#e4e7fc" stroke="none"/><path d="M-3.6 15.6 H3.6 L2.8 18.4 H-2.8 Z" fill="#4038bd" stroke="none"/><path d="M7 9.4 L8.6 9.9 L8.4 15.4 L7 15 Z" fill="#5b55c9" stroke="none"/><path d="M-9.8 -5 Q-10.8 4 -6 10 L-1 15.4 Q0.2 16 1 15.2 L5.4 10 Q8.8 4 7.8 -5 Q6.8 -11.4 -0.8 -11.4 Q-8.6 -11.4 -9.8 -5 Z" fill="url(#avs)" stroke="none"/><path d="M-10.8 1 Q-13 -13.6 -3 -16 Q8 -17.4 9.2 -4.6 L8.8 0.6 Q8.4 -7 4.6 -9.6 Q-1 -11.4 -6.6 -9 Q-9.6 -5.6 -10 1.4 Z" fill="#14161b" stroke="none"/><path d="M-7.4 -3.4 H-3.4 M1 -3.4 H5" stroke="#4a3324" stroke-width="1.5"/><path d="M-1.6 -2 L-1.2 3.4" stroke="#e2bb92" stroke-width="1.6"/><path d="M-3.6 7.6 Q-1 9.4 2.2 7.6" stroke="#b4534f" stroke-width="1.3"/></g></g>
<circle cx="17.9" cy="552.70" r="1.3" fill="#333" stroke="none"/>
<circle cx="17.9" cy="560.05" r="1.3" fill="#333" stroke="none"/>
<circle cx="17.9" cy="567.40" r="1.3" fill="#333" stroke="none"/>
<circle cx="23.6" cy="552.70" r="1.3" fill="#333" stroke="none"/>
<circle cx="23.6" cy="560.05" r="1.3" fill="#333" stroke="none"/>
<circle cx="23.6" cy="567.40" r="1.3" fill="#333" stroke="none"/>
<rect x="655.20" y="553.15" width="17.10" height="16.60" rx="2.6" stroke="#333" stroke-width="1.6" fill="none"/>
<rect x="658.60" y="550.85" width="10.30" height="4.3" rx="2.1" fill="#fff" stroke="#333" stroke-width="1.6"/>
<path d="M659.00 559.65 h0.9 M662.80 559.65 H668.60 M659.00 564.15 h0.9 M662.80 564.15 H667.20" stroke="#333" stroke-width="1.6" />
<rect x="1199.1" y="557.70" width="177.2" height="7.5" rx="3.75" fill="#ececec" stroke="none"/>
<rect x="1199.1" y="557.70" width="47.80" height="7.5" rx="3.75" fill="#7ab3ff" stroke="none"/>
<circle cx="1246.9" cy="561.45" r="7.5" fill="#7ab3ff" stroke="none"/>
<g transform="translate(877.0,561.90)"><circle r="19.6" fill="#f4f4f4" stroke="none" opacity="0.8" cy="0.6"/><circle r="19.2" fill="#fff" stroke="#e9e9e9" stroke-width="1.5"/><g clip-path="url(#avc)" filter="url(#avb)"><path d="M-11.5 19 L-11 9.5 Q-7 6 -2 6.4 L5 6.4 Q10.5 7.4 12.8 11 L13.4 19 Z" fill="#e4e7fc" stroke="none"/><path d="M-3.6 15.6 H3.6 L2.8 18.4 H-2.8 Z" fill="#4038bd" stroke="none"/><path d="M7 9.4 L8.6 9.9 L8.4 15.4 L7 15 Z" fill="#5b55c9" stroke="none"/><path d="M-9.8 -5 Q-10.8 4 -6 10 L-1 15.4 Q0.2 16 1 15.2 L5.4 10 Q8.8 4 7.8 -5 Q6.8 -11.4 -0.8 -11.4 Q-8.6 -11.4 -9.8 -5 Z" fill="url(#avs)" stroke="none"/><path d="M-10.8 1 Q-13 -13.6 -3 -16 Q8 -17.4 9.2 -4.6 L8.8 0.6 Q8.4 -7 4.6 -9.6 Q-1 -11.4 -6.6 -9 Q-9.6 -5.6 -10 1.4 Z" fill="#14161b" stroke="none"/><path d="M-7.4 -3.4 H-3.4 M1 -3.4 H5" stroke="#4a3324" stroke-width="1.5"/><path d="M-1.6 -2 L-1.2 3.4" stroke="#e2bb92" stroke-width="1.6"/><path d="M-3.6 7.6 Q-1 9.4 2.2 7.6" stroke="#b4534f" stroke-width="1.3"/></g></g>
<path d="M559.3 435.5 H603.1 A20.6 20.6 0 0 1 603.1 476.7 H547.3 A1.6 1.6 0 0 1 545.7 475.1 V449.2 A13.7 13.7 0 0 1 559.3 435.5 Z" fill="#fff" stroke="#d5d1e7" stroke-width="1.3"/>
<defs><linearGradient id="gb" x1="0" x2="0" y1="0" y2="1"><stop offset="0" stop-color="#52c29c"/><stop offset="1" stop-color="#3fa588"/></linearGradient></defs>
<path d="M567 443.8 A10.6 10.6 0 0 1 573.2 463 V464 H560.8 V463 A10.6 10.6 0 0 1 567 443.8 Z" fill="url(#gb)" stroke="none"/>
<path d="M561.3 465.8 H572.7 Q572 469.2 569.4 469.2 H564.6 Q562 469.2 561.3 465.8 Z" fill="#3fa387" stroke="none"/>
<path d="M567 448 Q567.9 452.8 572.6 453.8 Q567.9 454.8 567 459.6 Q566.1 454.8 561.4 453.8 Q566.1 452.8 567 448 Z" fill="#fff" stroke="none"/>
<path d="M602.6 440.7 A15.8 15.8 0 0 1 602.6 472.2 H586.6 V456.5 A15.9 15.9 0 0 1 602.6 440.7 Z" fill="#3b8270" stroke="none"/>
<path d="M609.9 450.2 A10 10 0 1 0 612 456.8 H605.2" stroke="#fff" stroke-width="2.7" stroke-linecap="butt" stroke-linejoin="miter"/>
<rect x="604.6" y="553" width="12.4" height="16" fill="#fff" stroke="none"/>
<circle cx="610" cy="563" r="5.5" fill="#3b8270" stroke="none"/>
<path d="M60.4 613.2 H73.4 M66.9 606.7 V619.7" stroke="#7db3ff" stroke-width="1.5" />
</svg>

<svg class="ov" width="1563" height="1250" viewBox="0 0 1563 1250"><rect x="1055.88" y="402.10" width="1.7" height="13.9" fill="#4c4c4c"/><path d="M1052.28 405.70 L1056.88 402.45" stroke="#4c4c4c" stroke-width="1.7" fill="none"/><rect x="1043.50" y="505.10" width="1.7" height="13.9" fill="#4c4c4c"/><path d="M1039.90 508.70 L1044.50 505.45" stroke="#4c4c4c" stroke-width="1.7" fill="none"/><rect x="1054.99" y="505.10" width="1.7" height="13.9" fill="#4c4c4c"/><path d="M1051.39 508.70 L1055.99 505.45" stroke="#4c4c4c" stroke-width="1.7" fill="none"/><rect x="1055.88" y="556.10" width="1.7" height="13.9" fill="#4c4c4c"/><path d="M1052.28 559.70 L1056.88 556.45" stroke="#4c4c4c" stroke-width="1.7" fill="none"/></svg>
</div></body></html>
